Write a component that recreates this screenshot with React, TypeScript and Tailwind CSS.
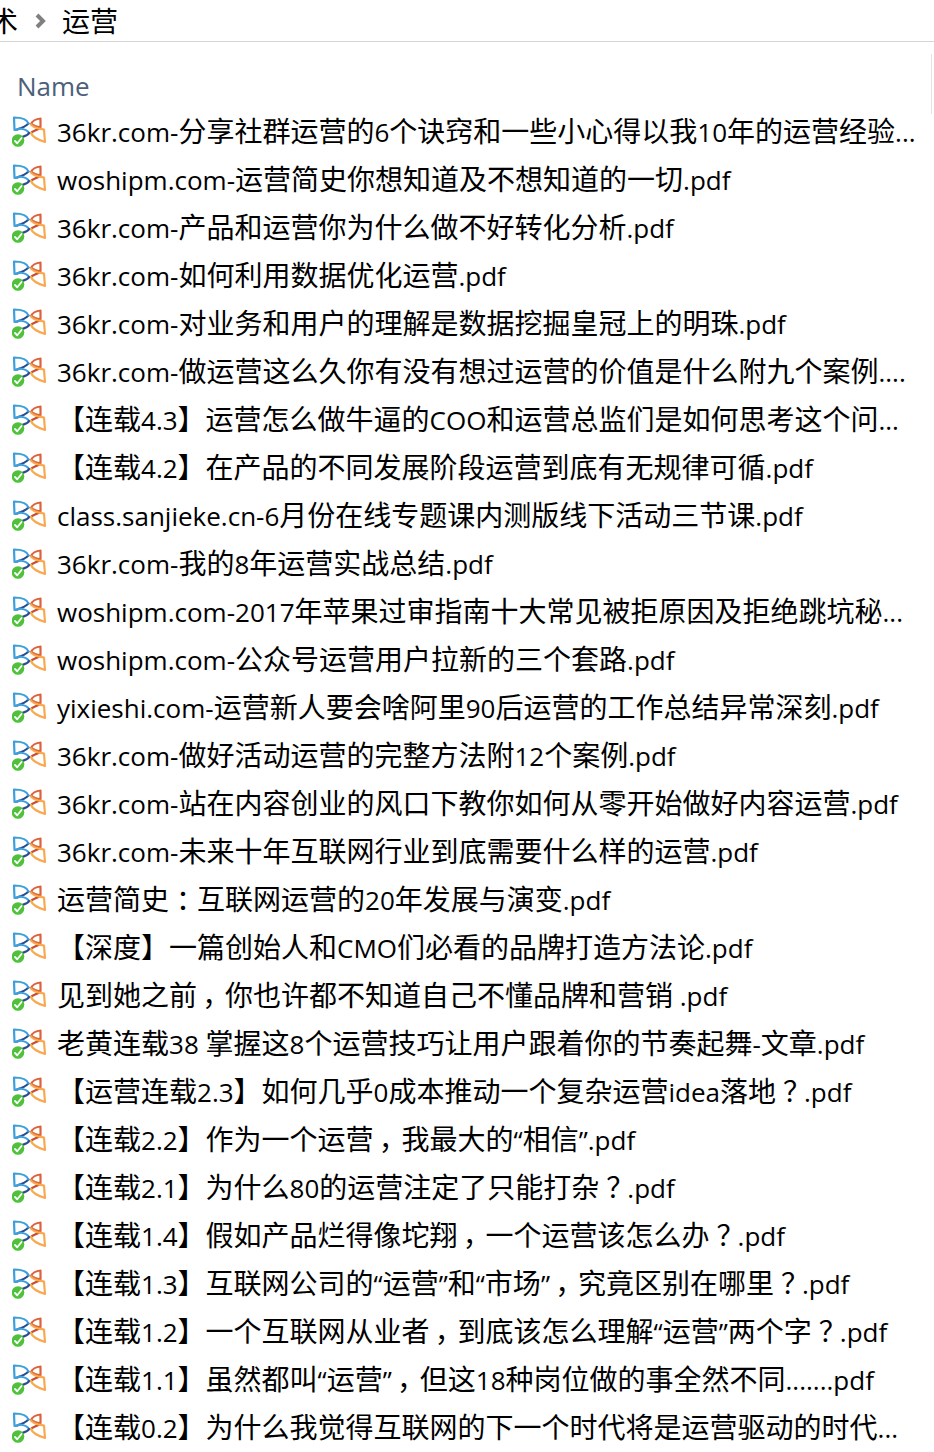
import React from 'react';

const files = [
  '36kr.com-分享社群运营的6个诀窍和一些小心得以我10年的运营经验...',
  'woshipm.com-运营简史你想知道及不想知道的一切.pdf',
  '36kr.com-产品和运营你为什么做不好转化分析.pdf',
  '36kr.com-如何利用数据优化运营.pdf',
  '36kr.com-对业务和用户的理解是数据挖掘皇冠上的明珠.pdf',
  '36kr.com-做运营这么久你有没有想过运营的价值是什么附九个案例....',
  '【连载4.3】运营怎么做牛逼的COO和运营总监们是如何思考这个问...',
  '【连载4.2】在产品的不同发展阶段运营到底有无规律可循.pdf',
  'class.sanjieke.cn-6月份在线专题课内测版线下活动三节课.pdf',
  '36kr.com-我的8年运营实战总结.pdf',
  'woshipm.com-2017年苹果过审指南十大常见被拒原因及拒绝跳坑秘...',
  'woshipm.com-公众号运营用户拉新的三个套路.pdf',
  'yixieshi.com-运营新人要会啥阿里90后运营的工作总结异常深刻.pdf',
  '36kr.com-做好活动运营的完整方法附12个案例.pdf',
  '36kr.com-站在内容创业的风口下教你如何从零开始做好内容运营.pdf',
  '36kr.com-未来十年互联网行业到底需要什么样的运营.pdf',
  '运营简史：互联网运营的20年发展与演变.pdf',
  '【深度】一篇创始人和CMO们必看的品牌打造方法论.pdf',
  '见到她之前，你也许都不知道自己不懂品牌和营销 .pdf',
  '老黄连载38 掌握这8个运营技巧让用户跟着你的节奏起舞-文章.pdf',
  '【运营连载2.3】如何几乎0成本推动一个复杂运营idea落地？.pdf',
  '【连载2.2】作为一个运营，我最大的“相信”.pdf',
  '【连载2.1】为什么80的运营注定了只能打杂？.pdf',
  '【连载1.4】假如产品烂得像坨翔，一个运营该怎么办？.pdf',
  '【连载1.3】互联网公司的“运营”和“市场”，究竟区别在哪里？.pdf',
  '【连载1.2】一个互联网从业者，到底该怎么理解“运营”两个字？.pdf',
  '【连载1.1】虽然都叫“运营”，但这18种岗位做的事全然不同.......pdf',
  '【连载0.2】为什么我觉得互联网的下一个时代将是运营驱动的时代...',
];

const latin = /^[\x20-\x7e“”]/;
const punctuation = /^[，？：]/;

// Latin runs are set a little smaller than the Chinese text around them,
// full-width punctuation is centred in its cell
const FileName: React.FC<{ name: string }> = ({ name }) => {
  const runs = name.match(/[\x20-\x7e“”]+|[，？：]|[^\x20-\x7e“”，？：]+/g) ?? [];
  return (
    <>
      {runs.map((run, i) => {
        if (latin.test(run)) {
          return (
            <span key={i} className="text-[26px] leading-none">
              {run}
            </span>
          );
        }
        if (punctuation.test(run)) {
          return (
            <span key={i} className="inline-block w-7 text-center leading-none [font-feature-settings:'palt']">
              {run}
            </span>
          );
        }
        return run;
      })}
    </>
  );
};

const PdfIcon: React.FC = () => (
  <svg
    className="h-8 w-9 shrink-0"
    viewBox="0 0 36 32"
    fill="none"
    strokeWidth="2.2"
    strokeLinejoin="round"
    strokeLinecap="round"
    aria-hidden="true"
  >
    {/* left wings */}
    <path d="M5 13.5 C10 12 14 10 16.5 7.5" stroke="#2d4f8e" />
    <path d="M16.5 7.5 C15 3 8 1.5 2 1.5 L2.5 14 C4 14 6 13.5 7.5 12.5 C12 13 15.5 14 17 17" stroke="#3d9fd9" />
    <path d="M17 17 C16 20 11 20 7 22.5" stroke="#2d4f8e" />
    {/* right wings */}
    <path d="M28.5 11.5 C25 11 21 9.5 19 8 C20 5.5 24 3 28.5 2.5 L28.5 11" stroke="#dc6338" />
    <path d="M27 12.5 C24 14.5 20 15 19 17" stroke="#c94f2a" />
    <path d="M19 8.5 C21 12 27 12.5 32 13.5 L33 26 C28 24.5 21 22 19 17" stroke="#f8a950" />
    {/* synced badge */}
    <circle cx="6" cy="24.5" r="6.3" fill="#4fc13b" />
    <path d="M3 25 L5.3 27.3 L9.5 22" stroke="#fff" strokeWidth="1.8" />
  </svg>
);

const Breadcrumb: React.FC = () => (
  <nav aria-label="Breadcrumb" className="flex h-[42px] items-center overflow-hidden border-b border-[#d5d5d5]">
    <a href="#" className="-ml-2.5">术</a>
    <svg className="mx-4 h-5 w-3" viewBox="0 0 12 20" fill="none" stroke="#808080" strokeWidth="4" aria-hidden="true">
      <path d="M3 4 L9 10 L3 16" />
    </svg>
    <a href="#" aria-current="page">运营</a>
  </nav>
);

export default function App() {
  return (
    <div className="overflow-hidden bg-white font-['Open_Sans','Noto_Sans_CJK_SC',sans-serif] text-[28px] leading-10 text-black">
      <Breadcrumb />
      <table className="w-full table-fixed border-collapse">
        <thead>
          <tr className="h-[66px]">
            <th scope="col" className="relative pt-[22px] pl-[17px] text-left text-[26px] font-normal text-[#4c607a]">
              Name
              <span className="absolute top-3 right-0.5 h-15 w-px bg-[#e2e2e2]" />
            </th>
          </tr>
        </thead>
        <tbody>
          {files.map((name) => (
            <tr key={name} className="h-12">
              <td className="p-0">
                <div className="flex h-12 items-start gap-[9px] pt-2 pl-3 whitespace-nowrap">
                  <PdfIcon />
                  <span className="leading-[30px]">
                    <FileName name={name} />
                  </span>
                </div>
              </td>
            </tr>
          ))}
        </tbody>
      </table>
    </div>
  );
}
